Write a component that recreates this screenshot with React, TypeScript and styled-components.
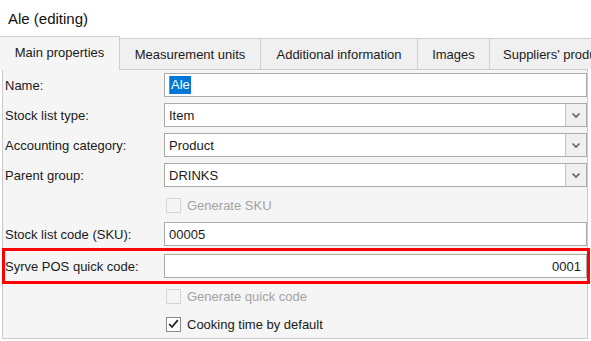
import * as React from "react";
import styled, { createGlobalStyle } from "styled-components";

const GlobalStyle = createGlobalStyle`
  html, body {
    margin: 0;
    padding: 0;
    background: #ffffff;
  }
  body {
    font-family: "Liberation Sans", Arial, sans-serif;
    font-size: 13px;
    color: #1a1a1a;
  }
`;

const SWindow = styled.div`
  width: 591px;
  height: 341px;
  overflow: hidden;
  background: #ffffff;
`;

const STitle = styled.div`
  height: 36px;
  padding-left: 8px;
  display: flex;
  align-items: center;
  font-size: 15px;
  color: #111;
`;

const STabBar = styled.div`
  display: flex;
  align-items: flex-end;
  height: 33px;
  position: relative;
  z-index: 1;
`;

const STab = styled.div<{ $active?: boolean; $width: number; $last?: boolean }>`
  flex: none;
  box-sizing: border-box;
  width: ${(p) => p.$width}px;
  height: ${(p) => (p.$active ? 34 : 31)}px;
  margin-bottom: ${(p) => (p.$active ? -1 : 0)}px;
  display: flex;
  align-items: center;
  justify-content: ${(p) => (p.$last ? "flex-start" : "center")};
  padding-left: ${(p) => (p.$last ? 13 : 0)}px;
  padding-bottom: ${(p) => (p.$active ? 3 : 0)}px;
  white-space: nowrap;
  overflow: hidden;
  background: ${(p) => (p.$active ? "#f5f5f5" : "#f0f0f0")};
  border-top: 1px solid #cfcfcf;
  border-right: 1px solid #cfcfcf;
  color: #1a1a1a;
`;

const SPanel = styled.div`
  box-sizing: border-box;
  margin-left: 2px;
  width: 586px;
  height: 270px;
  border: 1px solid #cbcbcb;
  background: #f5f5f5;
  display: flex;
  flex-direction: column;
  padding-top: 3px;
`;

const SFieldRow = styled.div<{ $top?: number; $labelWidth?: number }>`
  display: grid;
  grid-template-columns: ${(p) => p.$labelWidth ?? 161}px 1fr;
  align-items: center;
  height: 24px;
  margin-top: ${(p) => p.$top ?? 0}px;
`;

const SLabel = styled.div<{ $pad?: number }>`
  padding-left: ${(p) => p.$pad ?? 2}px;
  white-space: nowrap;
  color: #1a1a1a;
`;

const SInput = styled.div<{ $align?: string }>`
  box-sizing: border-box;
  height: 24px;
  border: 1px solid #ababab;
  background: #ffffff;
  display: flex;
  align-items: center;
  justify-content: ${(p) => p.$align ?? "flex-start"};
  padding: 0 5px 0 4px;
  color: #1a1a1a;
`;

const SSelect = styled.div`
  box-sizing: border-box;
  height: 24px;
  border: 1px solid #ababab;
  background: #ffffff;
  display: flex;
  align-items: stretch;
`;

const SSelectValue = styled.div`
  flex: 1;
  display: flex;
  align-items: center;
  padding-left: 4px;
  color: #1a1a1a;
`;

const SDropButton = styled.div`
  width: 20px;
  border-left: 1px solid #c4c4c4;
  background: #f0f0f0;
  display: flex;
  align-items: center;
  justify-content: center;
`;

const SSelection = styled.span`
  background: #0078d7;
  color: #ffffff;
  padding: 1px 1px 2px 1px;
  border-left: 1px solid #c87a2a;
`;

const SCheckRow = styled.div<{ $top?: number }>`
  display: flex;
  align-items: center;
  height: 24px;
  margin-top: ${(p) => p.$top ?? 0}px;
  padding-left: 163px;
`;

const SCheckBox = styled.div<{ $disabled?: boolean }>`
  box-sizing: border-box;
  width: 15px;
  height: 15px;
  border: 1px solid ${(p) => (p.$disabled ? "#d6d6d6" : "#8a8a8a")};
  background: ${(p) => (p.$disabled ? "#f5f5f5" : "#ffffff")};
  display: flex;
  align-items: center;
  justify-content: center;
`;

const SCheckText = styled.span<{ $disabled?: boolean }>`
  margin-left: 6px;
  color: ${(p) => (p.$disabled ? "#a3a3a3" : "#1a1a1a")};
  white-space: nowrap;
`;

const SHighlight = styled.div`
  margin: 2px -3px 0 -1px;
  border: 3px solid #ff0000;
  padding: 3px 0;
`;

const Chevron = () => (
  <svg width="10" height="7" viewBox="0 0 10 7">
    <path d="M1.5 1.5 L5 5 L8.5 1.5" fill="none" stroke="#666" strokeWidth="1.7" />
  </svg>
);

const Tick = () => (
  <svg width="11" height="10" viewBox="0 0 11 10">
    <path d="M1.2 5 L4 8 L9.8 1.2" fill="none" stroke="#222" strokeWidth="1.8" />
  </svg>
);

interface CheckProps {
  label: string;
  checked?: boolean;
  disabled?: boolean;
  top?: number;
}

const Check = ({ label, checked, disabled, top }: CheckProps) => (
  <SCheckRow $top={top}>
    <SCheckBox $disabled={disabled}>{checked && <Tick />}</SCheckBox>
    <SCheckText $disabled={disabled}>{label}</SCheckText>
  </SCheckRow>
);

const SelectField = ({ label, value, top }: { label: string; value: string; top: number }) => (
  <SFieldRow $top={top}>
    <SLabel>{label}</SLabel>
    <SSelect>
      <SSelectValue>{value}</SSelectValue>
      <SDropButton>
        <Chevron />
      </SDropButton>
    </SSelect>
  </SFieldRow>
);

const tabs = [
  { name: "Main properties", width: 120 },
  { name: "Measurement units", width: 141 },
  { name: "Additional information", width: 157 },
  { name: "Images", width: 72 },
  { name: "Suppliers' products", width: 140 },
];

const App = () => {
  return (
    <SWindow>
      <GlobalStyle />
      <STitle>Ale (editing)</STitle>
      <STabBar>
        {tabs.map((t, i) => (
          <STab
            key={t.name}
            $width={t.width}
            $active={i === 0}
            $last={i === tabs.length - 1}
          >
            {t.name}
          </STab>
        ))}
      </STabBar>
      <SPanel>
        <SFieldRow>
          <SLabel>Name:</SLabel>
          <SInput>
            <SSelection>Ale</SSelection>
          </SInput>
        </SFieldRow>
        <SelectField label="Stock list type:" value="Item" top={6} />
        <SelectField label="Accounting category:" value="Product" top={6} />
        <SelectField label="Parent group:" value="DRINKS" top={6} />
        <Check label="Generate SKU" disabled top={6} />
        <SFieldRow $top={5}>
          <SLabel>Stock list code (SKU):</SLabel>
          <SInput>00005</SInput>
        </SFieldRow>
        <SHighlight>
          <SFieldRow $labelWidth={159}>
            <SLabel $pad={0}>Syrve POS quick code:</SLabel>
            <SInput $align="flex-end">0001</SInput>
          </SFieldRow>
        </SHighlight>
        <Check label="Generate quick code" disabled />
        <Check label="Cooking time by default" checked top={4} />
      </SPanel>
    </SWindow>
  );
};

export default App;
